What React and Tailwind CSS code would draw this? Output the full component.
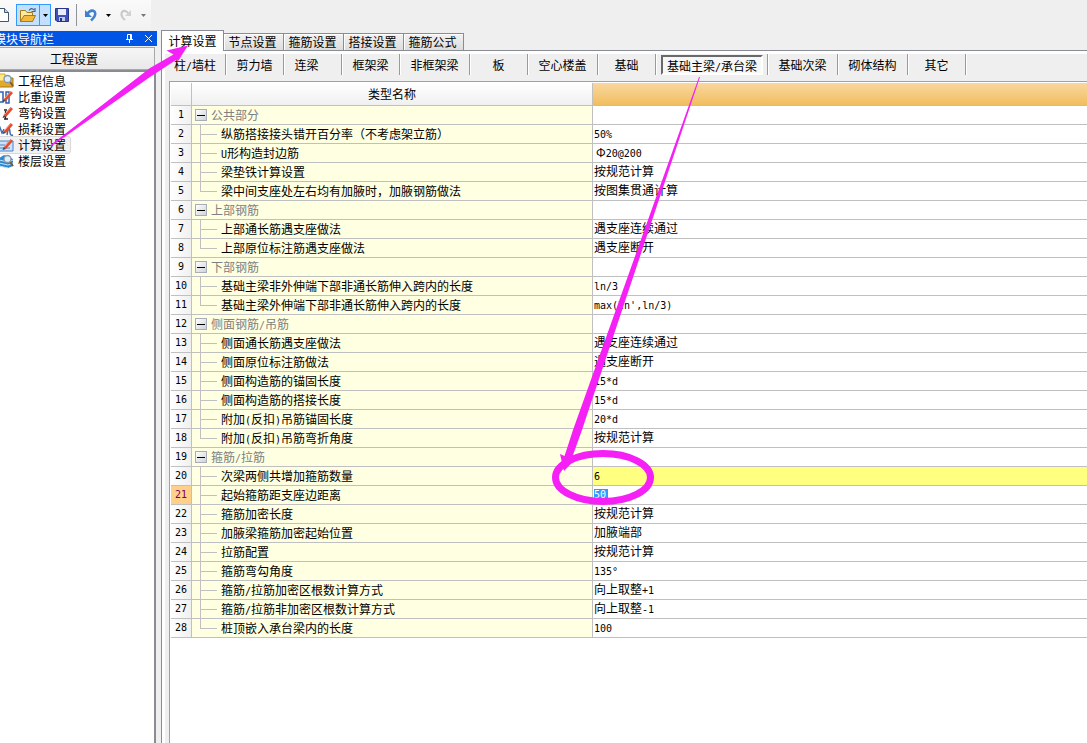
import React from "react";

const ROWS = [
  { g: "公共部分" },
  { n: "纵筋搭接接头错开百分率（不考虑架立筋）", v: "50%" },
  { n: "U形构造封边筋", v: "Φ20@200", indent: true },
  { n: "梁垫铁计算设置", v: "按规范计算" },
  { n: "梁中间支座处左右均有加腋时，加腋钢筋做法", v: "按图集贯通计算", last: true },
  { g: "上部钢筋" },
  { n: "上部通长筋遇支座做法", v: "遇支座连续通过" },
  { n: "上部原位标注筋遇支座做法", v: "遇支座断开", last: true },
  { g: "下部钢筋" },
  { n: "基础主梁非外伸端下部非通长筋伸入跨内的长度", v: "ln/3" },
  { n: "基础主梁外伸端下部非通长筋伸入跨内的长度", v: "max(ln',ln/3)", last: true },
  { g: "侧面钢筋/吊筋" },
  { n: "侧面通长筋遇支座做法", v: "遇支座连续通过" },
  { n: "侧面原位标注筋做法", v: "遇支座断开" },
  { n: "侧面构造筋的锚固长度", v: "15*d" },
  { n: "侧面构造筋的搭接长度", v: "15*d" },
  { n: "附加(反扣)吊筋锚固长度", v: "20*d" },
  { n: "附加(反扣)吊筋弯折角度", v: "按规范计算", last: true },
  { g: "箍筋/拉筋" },
  { n: "次梁两侧共增加箍筋数量", v: "6", marked: true },
  { n: "起始箍筋距支座边距离", v: "50", editing: true },
  { n: "箍筋加密长度", v: "按规范计算" },
  { n: "加腋梁箍筋加密起始位置", v: "加腋端部" },
  { n: "拉筋配置", v: "按规范计算" },
  { n: "箍筋弯勾角度", v: "135°" },
  { n: "箍筋/拉筋加密区根数计算方式", v: "向上取整+1" },
  { n: "箍筋/拉筋非加密区根数计算方式", v: "向上取整-1" },
  { n: "桩顶嵌入承台梁内的长度", v: "100", last: true },
];

const TABS = ["节点设置", "箍筋设置", "搭接设置", "箍筋公式"];

const MEMBERS = [
  { t: "柱/墙柱", w: "w-[61px]" },
  { t: "剪力墙", w: "w-[58px]" },
  { t: "连梁", w: "w-[58px] pr-3" },
  { t: "框架梁", w: "w-[58px]" },
  { t: "非框架梁", w: "w-[70px]" },
  { t: "板", w: "w-[58px]" },
  { t: "空心楼盖", w: "w-[70px]" },
  { t: "基础", w: "w-[58px]" },
  { t: "基础主梁/承台梁", w: "w-[112px] pl-[5px] pr-1", on: true },
  { t: "基础次梁", w: "w-[70px]" },
  { t: "砌体结构", w: "w-[70px]" },
  { t: "其它", w: "w-[58px]" },
];

// Sets half-width characters in a narrow monospace face beside full-width text.
function Mixed({ children }) {
  return children.split(/([\x20-\x7e°]+)/).map((part, i) =>
    i % 2 ? (
      <span key={i} className="font-['DejaVu_Sans_Mono',monospace] text-[10px] leading-none">{part}</span>
    ) : (
      part
    )
  );
}

function Pencil() {
  return (
    <>
      <path d="M5.500 10.500 L12.500 2 L15 4 L8 12 Z" fill="#e8482c" />
      <path d="M6.500 9.500 L13 2.200" stroke="#ff9a7c" strokeWidth="1" />
      <path d="M5.500 10.500 L8 12 L4.500 13 Z" fill="#3c3c3c" />
    </>
  );
}

function Lens() {
  return (
    <>
      <path d="M12 9 L15 13" stroke="#7a5c38" strokeWidth="2" />
      <circle cx="9.500" cy="6" r="3.500" fill="#d9effc" stroke="#8496a8" strokeWidth="1.300" />
    </>
  );
}

const NAV = [
  {
    t: "工程信息",
    icon: (
      <>
        <path d="M1 3 H6 L8 5 H15 V14 H1 Z" fill="#e5a928" stroke="#a87816" />
        <path d="M1 1 H7 V8 H1 Z" fill="#ffe98a" stroke="#d6a625" />
        <Lens />
      </>
    ),
  },
  {
    t: "比重设置",
    icon: (
      <>
        <path d="M1 3 H5 V13 H1 M8 3 H11 V14 H8 Z" fill="none" stroke="#2f62b0" strokeWidth="1.500" />
        <Pencil />
      </>
    ),
  },
  {
    t: "弯钩设置",
    icon: (
      <>
        <path d="M6 5 H9 M7.500 6 V14 M6 14 H10 M6 10 H9" stroke="#222" strokeWidth="1.300" />
        <Pencil />
      </>
    ),
  },
  {
    t: "损耗设置",
    icon: (
      <>
        <path d="M1 4 L4 12 L6 8 M9 14 Q11 3 12 11 Q12 15 15 14" fill="none" stroke="#3f6cad" strokeWidth="1.500" />
        <Pencil />
      </>
    ),
  },
  {
    t: "计算设置",
    on: true,
    icon: (
      <>
        <path d="M0 4 H15 V14 H0 Z" fill="#cbe2fa" stroke="#4a83c6" />
        <path d="M2 8 H7 M2 11 H12" stroke="#4a83c6" />
        <Pencil />
      </>
    ),
  },
  {
    t: "楼层设置",
    icon: (
      <>
        <path d="M1 5 L6 2 L15 6 V13 L10 15 L1 13 Z" fill="#2d86d2" />
        <path d="M1 7 L10 9 L15 7 M1 10 L10 12 L15 10 M1 13 L10 15" fill="none" stroke="#bfe2fb" />
        <Lens />
      </>
    ),
  },
];

function Toolbar() {
  return (
    <header className="h-[31px] bg-[#efefef]">
      <div className="flex h-[30px] w-[151px] items-center bg-linear-to-b from-[#fafafa] to-[#f1f1f1]">
        <button aria-label="新建" className="w-4 shrink-0">
          <svg className="-ml-1.5" width="16" height="16" viewBox="0 0 16 16">
            <path d="M2 1.500 H10.500 L14.500 5.500 V14.500 H2 Z" fill="#fff" stroke="#3e566f" />
            <path d="M10.500 1.500 V5.500 H14.500" fill="#c9d6e4" stroke="#3e566f" />
          </svg>
        </button>
        <button aria-label="打开" className="flex h-[22px] w-6 shrink-0 items-center justify-center border border-[#3399ff] bg-[#c2e0ff]">
          <svg width="18" height="16" viewBox="0 0 18 16">
            <path d="M1.500 14.500 V3.500 H6.500 L8 5.500 H13.500 V14.500 Z" fill="#ffe9a0" stroke="#a87a1e" />
            <path d="M1.500 14.500 L5 8.500 H16.500 L13.500 14.500 Z" fill="#f4b83a" stroke="#a87a1e" />
            <path d="M10 3.500 Q12.500 0 15 3 M16 1 V4.500 H12.500" fill="none" stroke="#4c6484" strokeWidth="1.200" />
          </svg>
        </button>
        <button aria-label="打开选项" className="-ml-px flex h-[22px] w-3 shrink-0 items-center justify-center border border-[#3399ff] bg-[#c2e0ff]">
          <svg width="5" height="3" viewBox="0 0 5 3"><path d="M0 0 H5 L2.500 3 Z" /></svg>
        </button>
        <button aria-label="保存" className="ml-1 shrink-0">
          <svg width="14" height="14" viewBox="0 0 14 14">
            <path d="M.5 .5 H13.500 V13.500 H2 L.5 12 Z" fill="#3f52b8" stroke="#26348a" />
            <path d="M3 1 H11 V7 H3 Z" fill="#e8eefb" />
            <path d="M4 9 H10 V13 H4 Z" fill="#c3cbe8" />
            <path d="M5 10 H7 V13 H5 Z" fill="#26348a" />
          </svg>
        </button>
        <span className="mx-[7px] h-[22px] w-px shrink-0 bg-[#8f9499]" />
        <button aria-label="撤销" className="shrink-0">
          <svg width="14" height="14" viewBox="0 0 14 14">
            <path d="M3 6 Q7 1 10.500 3.500 Q13 7 7 12.500" fill="none" stroke="#4080cf" strokeWidth="2.500" />
            <path d="M1 2 V9 H8 Z" fill="#4080cf" />
          </svg>
        </button>
        <button aria-label="撤销选项" className="ml-2 shrink-0">
          <svg width="5" height="3" viewBox="0 0 5 3"><path d="M0 0 H5 L2.500 3 Z" /></svg>
        </button>
        <button aria-label="重做" className="ml-2 shrink-0">
          <svg width="14" height="14" viewBox="0 0 14 14">
            <path d="M10 6 Q6 1 3 4 Q1 8 6 12" fill="none" stroke="#c8c8c8" strokeWidth="2" />
            <path d="M12 2 V8 H6 Z" fill="#d2d2d2" />
          </svg>
        </button>
        <button aria-label="重做选项" className="ml-2 shrink-0">
          <svg width="5" height="3" viewBox="0 0 5 3"><path d="M0 0 H5 L2.500 3 Z" fill="#777" /></svg>
        </button>
      </div>
    </header>
  );
}

function Sidebar() {
  return (
    <aside className="flex w-[157px] shrink-0 flex-col overflow-hidden">
      <div className="flex h-[15px] items-center justify-between bg-[#0055e5] text-white">
        <h2 className="-ml-1.5 leading-[15px]">模块导航栏</h2>
        <div className="flex gap-2.5 pr-1">
          <button aria-label="固定">
            <svg width="9" height="9" viewBox="0 0 9 9" fill="none" stroke="#fff">
              <path d="M2.500 5 V.5 H6.500 V5 M1 5.500 H8 M4.500 5.500 V9 M5.500 1 V5" />
            </svg>
          </button>
          <button aria-label="关闭">
            <svg width="9" height="9" viewBox="0 0 9 9" stroke="#fff"><path d="M1 1 L8 8 M8 1 L1 8" /></svg>
          </button>
        </div>
      </div>
      <button className="mt-px h-[23px] w-[155px] border border-l-0 border-[#a8a8a8] bg-linear-to-b from-[#f6f6f6] to-[#e9e9e9] pr-1.5">
        工程设置
      </button>
      <nav className="mr-px flex flex-1 flex-col items-start border-t-2 border-r-2 border-[#898d93] bg-white pt-px">
        {NAV.map((it) => (
          <a
            key={it.t}
            href="#"
            className={
              "flex h-4 items-center gap-1 pr-1 leading-4 " +
              (it.on ? "rounded-r-xs bg-[#f1f1f1] outline outline-[#d9d9d9]" : "")
            }
          >
            <svg className="-ml-0.5 shrink-0" width="16" height="16" viewBox="0 0 16 16">{it.icon}</svg>
            {it.t}
          </a>
        ))}
      </nav>
    </aside>
  );
}

function Row({ row, i }) {
  const line = "border-b border-[#c0c0c0] p-0 h-[19px]";
  return (
    <tr>
      <th
        scope="row"
        className={
          line + " border-r text-center font-normal " +
          (row.editing ? "bg-[#ffd08a] text-[#800060]" : "bg-linear-to-r from-white to-[#f0f0f0]")
        }
      >
        <div className="font-['DejaVu_Sans_Mono',monospace] text-[10px] leading-[18px]">{i + 1}</div>
      </th>
      <td className={line + " border-r bg-[#ffffe1]"}>
        {row.g ? (
          <div className="flex h-[18px] items-center gap-1 pl-[3px] text-[#808080]">
            <button
              aria-label={"折叠" + row.g}
              className="flex size-3 items-center justify-center border border-[#a9adb5] bg-linear-to-br from-white to-[#cfd3da]"
            >
              <span className="h-px w-2 bg-black" />
            </button>
            <span><Mixed>{row.g}</Mixed></span>
          </div>
        ) : (
          <div className="flex h-[18px] items-center gap-1 pl-2">
            <div className="flex h-full w-[17px] flex-col">
              <span className="h-[10px] border-b border-l border-[#c0c0c0]" />
              <span className={"flex-1 border-[#c0c0c0] " + (row.last ? "" : "border-l")} />
            </div>
            <span><Mixed>{row.n}</Mixed></span>
          </div>
        )}
      </td>
      <td className={line + " " + (row.marked ? "bg-[#ffff80]" : "bg-white")}>
        {row.editing ? (
          <input
            aria-label={row.n}
            defaultValue={row.v}
            className="ml-px block h-3 w-3.5 bg-[#3399ff] p-0 font-['DejaVu_Sans_Mono',monospace] text-[10px] text-white"
          />
        ) : (
          <div className={"h-[18px] leading-4 " + (row.indent ? "pl-[3px]" : "pl-px")}>
            {row.v && <Mixed>{row.v}</Mixed>}
          </div>
        )}
      </td>
    </tr>
  );
}

function Annotations() {
  return (
    <svg
      aria-hidden="true"
      className="pointer-events-none absolute top-0 left-0"
      width="700"
      height="520"
      viewBox="0 0 700 520"
    >
      <g fill="#f520f5">
        <path d="M50 145.500 L150 68 L173.500 54.500 L166.500 50.500 L188 45.500 L177.500 62 L177.500 59 L150 77 L51 146.500 Z" />
        <path d="M699 77 L573 430 L564.500 456 L560 454 L564 471 L577 457.500 L573 455 L582 430 L700 77 Z" />
      </g>
      <ellipse cx="603" cy="477.500" rx="47.500" ry="24" fill="none" stroke="#f520f5" strokeWidth="7" />
    </svg>
  );
}

export default function App() {
  return (
    <div className="relative flex min-h-screen flex-col overflow-hidden bg-[#efefef] font-['Noto_Sans_CJK_SC',sans-serif] text-[12px] leading-[18px] text-black">
      <Toolbar />
      <div className="flex flex-1">
        <Sidebar />
        <main className="ml-1 flex min-w-0 flex-1 flex-col">
          <div role="tablist" className="flex h-5 items-end border-b border-[#898c95]">
            <button
              role="tab"
              aria-selected="true"
              className="-mb-px h-[21px] w-[63px] border border-b-0 border-[#898c95] bg-white"
            >
              计算设置
            </button>
            {TABS.map((t) => (
              <button
                key={t}
                role="tab"
                aria-selected="false"
                className="-mb-px h-[18px] w-[60px] border border-l-0 border-[#898c95] bg-linear-to-b from-[#f2f2f2] to-[#dddddd] pr-0.5 leading-4 shadow-[inset_1px_1px_#fff]"
              >
                {t}
              </button>
            ))}
          </div>
          <div className="flex flex-1 flex-col border-l border-[#898c95] bg-white pt-[3px] pl-[3px]">
            <div className="flex h-[27px] items-start bg-[#efefef]">
              {MEMBERS.map((m) => (
                <button
                  key={m.t}
                  className={"h-[21px] shrink-0 border-r border-[#9a9a9a] shadow-[1px_0_#fff] " + m.w}
                >
                  {m.on ? (
                    <span className="block h-5 border-2 border-t-[#696969] border-r-white border-b-white border-l-[#696969] bg-[#f7f7f7] leading-[17px]">
                      <Mixed>{m.t}</Mixed>
                    </span>
                  ) : (
                    <Mixed>{m.t}</Mixed>
                  )}
                </button>
              ))}
            </div>
            <div className="flex flex-1 flex-col bg-[#efefef] pl-1">
              <div className="flex-1 border-t border-l border-[#a0a0a8] bg-white pt-px pl-px">
                <table className="w-full table-fixed border-separate border-spacing-0">
                  <colgroup>
                    <col className="w-[21px]" />
                    <col className="w-[401px]" />
                    <col />
                  </colgroup>
                  <thead>
                    <tr>
                      <th className="h-[23px] border-r border-b border-[#c0c0c0] bg-linear-to-b from-white to-[#f0f0f0] p-0" />
                      <th className="border-r border-b border-[#c0c0c0] bg-linear-to-b from-white to-[#f0f0f0] p-0 font-normal">
                        类型名称
                      </th>
                      <th className="border-b border-[#c0c0c0] bg-linear-to-b from-[#fad7a0] to-[#f0be5c] p-0" />
                    </tr>
                  </thead>
                  <tbody>
                    {ROWS.map((r, i) => (
                      <Row key={i} row={r} i={i} />
                    ))}
                  </tbody>
                </table>
              </div>
            </div>
          </div>
        </main>
      </div>
      <Annotations />
    </div>
  );
}
